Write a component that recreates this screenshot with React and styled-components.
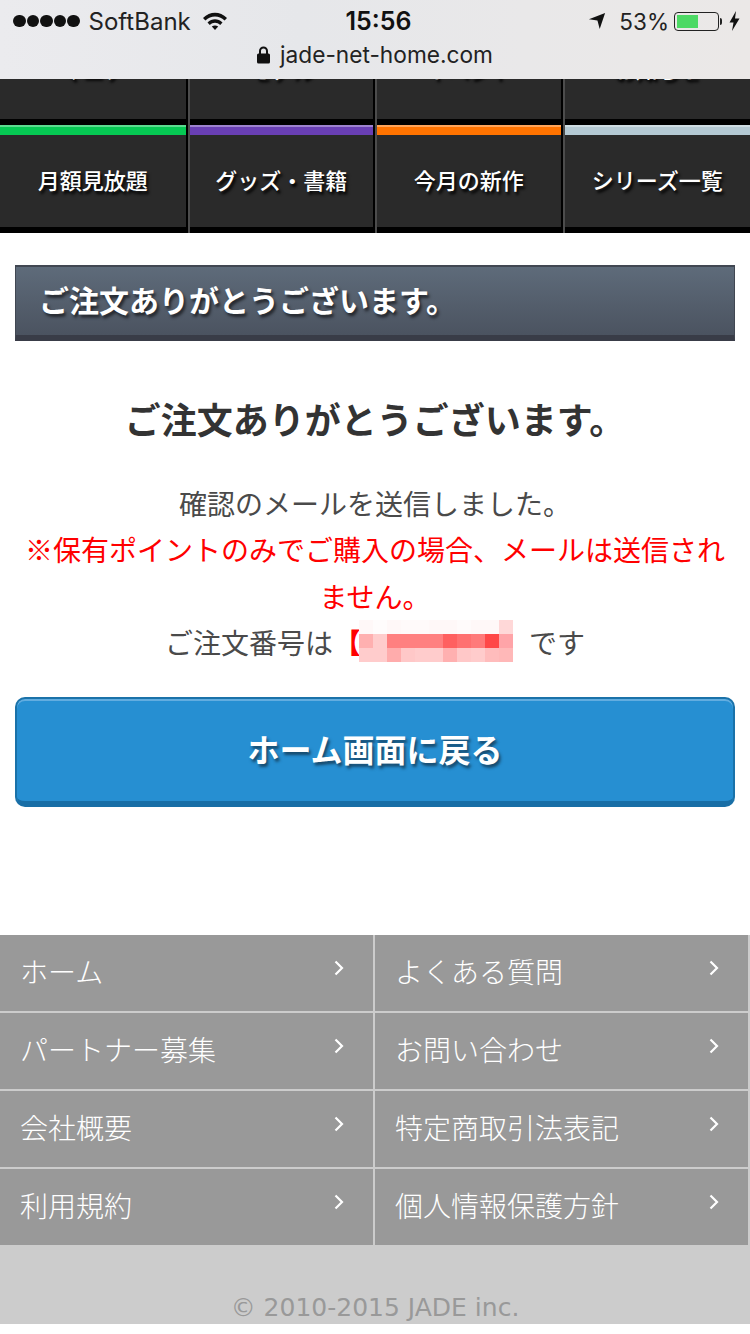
import React from 'react';
import styled, { createGlobalStyle } from 'styled-components';

const GlobalStyle = createGlobalStyle`
  html, body {
    margin: 0;
    padding: 0;
    background: #fff;
  }
  body {
    font-family: "Noto Sans CJK JP", "Liberation Sans", sans-serif;
  }
`;

const Page = styled.div`
  position: relative;
  width: 750px;
  height: 1334px;
  overflow: hidden;
  padding-top: 17px;
  box-sizing: border-box;
`;

/* iOS browser chrome lying over the scrolled page */
const StatusBar = styled.header`
  position: absolute;
  top: 0;
  left: 0;
  right: 0;
  height: 79px;
  background: linear-gradient(90deg, #ebebee 0%, #e6e7ea 40%, #e9e8e9 70%, #ebe8e7 100%);
  color: #111;
  font-family: Inter, "Liberation Sans", sans-serif;
`;

const StatusRow = styled.div`
  display: grid;
  grid-template-columns: 1fr auto 1fr;
  align-items: center;
  height: 42px;
  padding: 0 10px 0 13px;
`;

const Carrier = styled.div`
  display: flex;
  align-items: center;
  font-size: 24px;
  color: #222;
`;

const Dots = styled.div`
  display: flex;
  gap: 1px;
  margin-right: 9px;
`;

const Dot = styled.span`
  width: 12.5px;
  height: 12.5px;
  border-radius: 50%;
  background: #111;
`;

const Time = styled.div`
  font-size: 25px;
  font-weight: 600;
  padding-left: 4px;
`;

const StatusRight = styled.div`
  display: flex;
  align-items: center;
  justify-content: flex-end;
  font-size: 22.5px;
  color: #222;
`;

const Battery = styled.div`
  width: 39px;
  height: 13px;
  border: 1px solid #222;
  border-radius: 4px;
  padding: 2px;
  margin-left: 5px;
  box-sizing: content-box;
`;

const BatteryFill = styled.div`
  width: 53%;
  height: 100%;
  background: #4cd964;
`;

const BatteryNub = styled.span`
  width: 2px;
  height: 7px;
  background: #222;
  border-radius: 0 2px 2px 0;
  margin: 0 7px 0 1px;
`;

const UrlRow = styled.div`
  display: flex;
  align-items: center;
  justify-content: center;
  gap: 10px;
  font-size: 22.7px;
  line-height: 26px;
  color: #222;
`;

const Nav = styled.nav`
  display: grid;
  grid-template-columns: repeat(4, 1fr);
`;

const NavCell = styled.a`
  display: flex;
  flex-direction: column;
  height: 108px;
  box-sizing: border-box;
  border-left: 2px solid #4c4c4c;
  border-right: 2px solid #000;
  background: #2a2a2a;

  &:nth-child(4n + 1) {
    border-left: none;
  }
  &:nth-child(4n) {
    border-right: none;
  }
`;

const NavStrip = styled.span`
  display: block;
  height: 8px;
  border-top: 2px solid rgba(255, 255, 255, 0.35);
  background: ${(p) => p.$color};
`;

const NavLabel = styled.span`
  flex: 1;
  display: flex;
  align-items: center;
  justify-content: center;
  padding-bottom: ${(p) => (p.$hidden ? '10px' : '4px')};
  color: #fff;
  font-size: 22px;
  font-weight: 500;
  text-shadow: 2px 3px 3px #000;
`;

const NavFoot = styled.span`
  display: block;
  height: 6px;
  background: #000;
`;

const Main = styled.main`
  padding: 32px 15px 0;
`;

const TitleBar = styled.h2`
  margin: 0;
  height: 76px;
  box-sizing: border-box;
  padding: 0 0 4px 23px;
  display: flex;
  align-items: center;
  border-top: 2px solid #414752;
  border-left: 1px solid #414752;
  border-right: 1px solid #414752;
  border-bottom: 6px solid #393c47;
  background: linear-gradient(180deg, #5e6b7a 0%, #4b5360 100%);
  color: #fff;
  font-size: 30px;
  font-weight: 700;
  text-shadow: 2px 3px 3px #23262c;
`;

const Thanks = styled.h3`
  margin: 52px 0 0;
  text-align: center;
  font-size: 36px;
  line-height: 50px;
  font-weight: 700;
  color: #333;
`;

const Message = styled.div`
  margin-top: 37px;
  text-align: center;
  font-size: 28px;
  line-height: 46.3px;
  color: #4a4a4a;
`;

const Notice = styled.div`
  color: #f00;
`;

const OrderLine = styled.div`
  display: flex;
  align-items: center;
  justify-content: center;
  height: 46px;
`;

const Bracket = styled.span`
  color: #f00;
  font-weight: 700;
  margin-right: -2px;
`;

const Mosaic = styled.div`
  display: grid;
  grid-template-columns: repeat(11, 14px);
  grid-auto-rows: 14px;
  margin: -2px 16px 0 0;
`;

const MosaicBlock = styled.span`
  background: ${(p) => p.$color};
`;

const HomeButton = styled.a`
  display: flex;
  align-items: center;
  justify-content: center;
  height: 110px;
  margin-top: 32px;
  padding-bottom: 4px;
  box-sizing: border-box;
  border: 2px solid #1a72a9;
  border-bottom: 6px solid #186ea6;
  border-radius: 10px;
  background: #268fd2;
  box-shadow: inset 0 2px 0 #62ade0;
  color: #fff;
  font-size: 32px;
  font-weight: 700;
  text-shadow: 2px 3px 3px #17496b;
`;

const Footer = styled.footer`
  margin-top: 128px;
  background: #ccc;
`;

const FooterGrid = styled.div`
  display: grid;
  grid-template-columns: 375px 375px;
  grid-auto-rows: 78px;
`;

const FooterLink = styled.a`
  display: flex;
  align-items: center;
  justify-content: space-between;
  box-sizing: border-box;
  padding: 0 28px 4px 20px;
  background: #999;
  border-right: 2px solid #ccc;
  border-bottom: 2px solid #ccc;
  color: #fff;
  font-size: 28px;
  font-weight: 300;
`;

const Chevron = styled.svg`
  width: 12px;
  height: 16px;
  margin-bottom: 6px;
`;

const Copyright = styled.div`
  padding-top: 45px;
  text-align: center;
  font-family: "DejaVu Sans", sans-serif;
  font-size: 25px;
  line-height: 32px;
  color: #999;
`;

const navItems = [
  { label: 'マニア', color: '#c33', hidden: true },
  { label: 'モデル', color: '#36c', hidden: true },
  { label: 'イベント', color: '#c93', hidden: true },
  { label: 'お知らせ', color: '#3a9', hidden: true },
  { label: '月額見放題', color: '#06c853' },
  { label: 'グッズ・書籍', color: '#693fb4' },
  { label: '今月の新作', color: '#ff7300' },
  { label: 'シリーズ一覧', color: '#b4c9d3' },
];

const footerLinks = [
  'ホーム', 'よくある質問',
  'パートナー募集', 'お問い合わせ',
  '会社概要', '特定商取引法表記',
  '利用規約', '個人情報保護方針',
];

const mosaicColors = [
  '#fff8f8', '#fffcfc', '#fff8f8', '#fffafa', '#fffafa', '#fff8f8', '#fff8f8', '#fffbfb', '#fff8f8', '#fff8f8', '#ffd8d8',
  '#ffb0b0', '#ffcccc', '#ff8080', '#ff8080', '#ff8080', '#ff8080', '#ff6060', '#ff7070', '#ff7a7a', '#ff4848', '#ffa4a8',
  '#ffcccc', '#ffcccc', '#ffacac', '#ffc8c8', '#ffcccc', '#ffcccc', '#ffb0b0', '#ffc8c8', '#ffcccc', '#ffbcbc', '#ffb8b8',
];

const App = () => {
  return (
    <Page>
      <GlobalStyle />
      <Nav>
        {navItems.map((item) => (
          <NavCell key={item.label}>
            <NavStrip $color={item.color} />
            <NavLabel $hidden={item.hidden}>{item.label}</NavLabel>
            <NavFoot />
          </NavCell>
        ))}
      </Nav>
      <Main>
        <TitleBar>ご注文ありがとうございます。</TitleBar>
        <Thanks>ご注文ありがとうございます。</Thanks>
        <Message>
          <div>確認のメールを送信しました。</div>
          <Notice>※保有ポイントのみでご購入の場合、メールは送信されません。</Notice>
          <OrderLine>
            ご注文番号は<Bracket>【</Bracket>
            <Mosaic>
              {mosaicColors.map((c, i) => (
                <MosaicBlock key={i} $color={c} />
              ))}
            </Mosaic>
            です
          </OrderLine>
        </Message>
        <HomeButton>ホーム画面に戻る</HomeButton>
      </Main>
      <Footer>
        <FooterGrid>
          {footerLinks.map((label) => (
            <FooterLink key={label}>
              {label}
              <Chevron viewBox="0 0 12 16">
                <path d="M2.5 1.5 L9 8 L2.5 14.5" fill="none" stroke="#fff" strokeWidth="2.2" />
              </Chevron>
            </FooterLink>
          ))}
        </FooterGrid>
        <Copyright>© 2010-2015 JADE inc.</Copyright>
      </Footer>
      <StatusBar>
        <StatusRow>
          <Carrier>
            <Dots>
              {[0, 1, 2, 3, 4].map((i) => <Dot key={i} />)}
            </Dots>
            SoftBank
            <svg width="26" height="20" viewBox="0 0 26 20" style={{ marginLeft: 11 }}>
              <path d="M1 7 C8 0 18 0 25 7 L22.6 9.5 C17 4 9 4 3.4 9.5 Z" fill="#111" />
              <path d="M5.5 11.5 C10 7.3 16 7.3 20.5 11.5 L18.2 14 C15 11 11 11 7.8 14 Z" fill="#111" />
              <path d="M9.8 15.6 C11.8 14 14.2 14 16.2 15.6 L13 19 Z" fill="#111" />
            </svg>
          </Carrier>
          <Time>15:56</Time>
          <StatusRight>
            <svg width="18" height="18" viewBox="0 0 20 20" style={{ marginRight: 13 }}>
              <path d="M19 1 L13 19 L10.5 9.5 L1 8 Z" fill="#111" />
            </svg>
            53%
            <Battery><BatteryFill /></Battery>
            <BatteryNub />
            <svg width="11" height="20" viewBox="0 0 11 20">
              <path d="M7 0 L0.5 11.5 L4.5 11.5 L3 20 L10.5 7.5 L6 7.5 Z" fill="#111" />
            </svg>
          </StatusRight>
        </StatusRow>
        <UrlRow>
          <svg width="13" height="18" viewBox="0 0 13 18">
            <path d="M3 8 V5 a3.5 3.5 0 0 1 7 0 V8" fill="none" stroke="#111" strokeWidth="2" />
            <rect x="0" y="7.5" width="13" height="10" rx="1.5" fill="#111" />
          </svg>
          jade-net-home.com
        </UrlRow>
      </StatusBar>
    </Page>
  );
};

export default App;
